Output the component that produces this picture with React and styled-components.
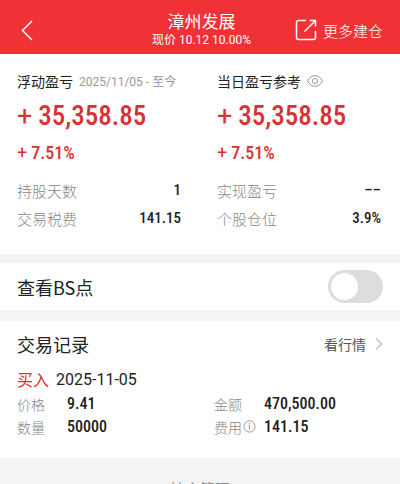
import React, { useState } from "react"
import styled, { createGlobalStyle } from "styled-components"

const stats = [
  {
    title: "浮动盈亏",
    period: "2025/11/05 - 至今",
    amount: "35,358.85",
    percent: "7.51%",
    rows: [
      ["持股天数", "1"],
      ["交易税费", "141.15"],
    ],
  },
  {
    title: "当日盈亏参考",
    toggle: true,
    amount: "35,358.85",
    percent: "7.51%",
    rows: [
      ["实现盈亏", "––"],
      ["个股仓位", "3.9%"],
    ],
  },
]

const record = [
  { label: "价格", value: "9.41" },
  { label: "金额", value: "470,500.00" },
  { label: "数量", value: "50000" },
  { label: "费用", value: "141.15", info: true },
]

const App = () => {
  const [showPoints, setShowPoints] = useState(false)

  return (
    <>
      <GlobalStyle />
      <Header>
        <IconButton aria-label="返回">
          <svg width="13" height="21" viewBox="0 0 13 21" fill="none" stroke="#fff" strokeWidth="1.5">
            <path d="M12 1L2.500 10.500l9.500 9.500" />
          </svg>
        </IconButton>
        <Heading>
          <StockName>漳州发展</StockName>
          <Price>现价 10.12 10.00%</Price>
        </Heading>
        <MoreButton>
          <svg width="22" height="22" viewBox="0 0 22 22" fill="none" stroke="#fff" strokeWidth="1.5">
            <path d="M11 1.5H3.5a2 2 0 0 0-2 2v15a2 2 0 0 0 2 2h15a2 2 0 0 0 2-2V12" />
            <path d="M14.5 1.5h6v6M20.5 1.5L9.5 12.5" />
          </svg>
          更多建仓
        </MoreButton>
      </Header>

      <Stats>
        {stats.map(stat => (
          <div key={stat.title}>
            <StatHead>
              <StatTitle>{stat.title}</StatTitle>
              {stat.period && <Period>{stat.period}</Period>}
              {stat.toggle && (
                <IconButton aria-label="隐藏金额">
                  <svg width="16" height="12" viewBox="0 0 16 12" fill="none" stroke="#999">
                    <path d="M.6 6C2.5 2.400 5 .7 8 .7S13.500 2.400 15.400 6C13.500 9.600 11 11.300 8 11.300S2.500 9.600.6 6z" />
                    <circle cx="8" cy="6" r="2.600" />
                  </svg>
                </IconButton>
              )}
            </StatHead>
            <Amount>
              <span>+</span>
              {stat.amount}
            </Amount>
            <Percent>
              <span>+</span>
              {stat.percent}
            </Percent>
            <Details>
              {stat.rows.map(([label, value]) => (
                <DetailRow key={label}>
                  <dt>{label}</dt>
                  <dd>{value}</dd>
                </DetailRow>
              ))}
            </Details>
          </div>
        ))}
      </Stats>

      <SwitchRow>
        <SwitchLabel htmlFor="bs-points">查看BS点</SwitchLabel>
        <Switch
          id="bs-points"
          type="checkbox"
          role="switch"
          checked={showPoints}
          onChange={e => setShowPoints(e.target.checked)}
        />
      </SwitchRow>

      <Records>
        <RecordsHead>
          <SectionTitle>交易记录</SectionTitle>
          <QuoteLink href="#quote">
            看行情
            <svg width="8" height="14" viewBox="0 0 8 14" fill="none" stroke="#bbb" strokeWidth="1.2">
              <path d="M1 1.500L6.500 7 1 12.500" />
            </svg>
          </QuoteLink>
        </RecordsHead>
        <Trade>
          <Side>买入</Side>
          <time>2025-11-05</time>
        </Trade>
        <RecordGrid>
          {record.map(item => (
            <RecordItem key={item.label}>
              <dt>
                {item.label}
                {item.info && (
                  <IconButton aria-label="费用说明">
                    <svg width="13" height="13" viewBox="0 0 13 13" fill="none" stroke="#999">
                      <circle cx="6.500" cy="6.500" r="5.600" />
                      <path d="M5.500 5.500h1v4M6.500 3v1.200" />
                    </svg>
                  </IconButton>
                )}
              </dt>
              <dd>{item.value}</dd>
            </RecordItem>
          ))}
        </RecordGrid>
      </Records>

      <Footer>持仓管理</Footer>
    </>
  )
}

export default App

const GlobalStyle = createGlobalStyle`
  * {
    box-sizing: border-box;
  }
  body {
    margin: 0;
    background: #f4f4f4;
    color: #222;
    font-family: Roboto, "Noto Sans CJK SC", sans-serif;
    font-size: 15px;
  }
  h1, h2, p, dl, dd {
    margin: 0;
    font-weight: 400;
  }
  button {
    padding: 0;
    border: 0;
    background: none;
    color: inherit;
    font: inherit;
    cursor: pointer;
  }
  svg {
    display: block;
  }
`

const Header = styled.header`
  display: grid;
  grid-template-columns: 1fr auto 1fr;
  align-items: center;
  height: 54px;
  padding: 6px 17px 0 20px;
  background: #f03237;
  color: #fff;
`

const IconButton = styled.button`
  display: flex;
  align-items: center;
  justify-self: start;
`

const Heading = styled.div`
  text-align: center;
`

const StockName = styled.h1`
  font-size: 17px;
  line-height: 20px;
`

const Price = styled.p`
  font-size: 12px;
  line-height: 16px;
`

const MoreButton = styled.button`
  display: flex;
  align-items: center;
  justify-self: end;
  gap: 6px;
  font-size: 15px;
  font-weight: 300;
  white-space: nowrap;
`

const Stats = styled.section`
  display: grid;
  grid-template-columns: 1fr 1fr;
  column-gap: 36px;
  padding: 16px 19px 20px 17px;
  background: #fff;
`

const StatHead = styled.div`
  display: flex;
  align-items: center;
  gap: 6px;
  height: 21px;
  white-space: nowrap;
`

const StatTitle = styled.h2`
  font-size: 14px;
`

const Period = styled.span`
  color: #999;
  font-size: 12px;
`

const Amount = styled.p`
  display: flex;
  gap: 6px;
  margin-top: 7px;
  color: #d93236;
  font-family: "Roboto Condensed", Roboto, sans-serif;
  font-size: 27px;
  font-weight: 500;
  line-height: 36px;

  span {
    font-family: Roboto, sans-serif;
    font-weight: 400;
  }
`

const Percent = styled(Amount)`
  gap: 4px;
  margin-top: 7px;
  font-size: 18px;
  line-height: 24px;
`

const Details = styled.dl`
  margin-top: 13px;
`

const DetailRow = styled.div`
  display: flex;
  justify-content: space-between;
  line-height: 28px;

  dt {
    color: #888;
    font-weight: 300;
  }
  dd {
    font-family: "Roboto Condensed", Roboto, sans-serif;
    font-weight: 500;
    line-height: 24px;
  }
`

const SwitchRow = styled.section`
  display: flex;
  align-items: center;
  justify-content: space-between;
  margin: 9px 0 11px;
  padding: 7px 17px;
  background: #fff;
`

const SwitchLabel = styled.label`
  font-family: "Noto Sans CJK SC", sans-serif;
  font-size: 18px;
  line-height: 24px;
`

const Switch = styled.input`
  appearance: none;
  display: flex;
  align-items: center;
  width: 55px;
  height: 33px;
  margin: 0;
  padding: 0 3px;
  border-radius: 17px;
  background: #ddd;
  cursor: pointer;

  &::before {
    content: "";
    width: 27px;
    height: 27px;
    border-radius: 50%;
    background: #fff;
  }
  &:checked {
    justify-content: flex-end;
    background: #f03237;
  }
`

const Records = styled.section`
  padding: 9px 17px 20px;
  background: #fff;
`

const RecordsHead = styled.div`
  display: flex;
  align-items: center;
  justify-content: space-between;
  height: 28px;
`

const SectionTitle = styled.h2`
  font-size: 18px;
`

const QuoteLink = styled.a`
  display: flex;
  align-items: center;
  gap: 9px;
  color: #555;
  font-size: 14px;
  text-decoration: none;
`

const Trade = styled.div`
  display: flex;
  align-items: center;
  gap: 7px;
  height: 24px;
  margin-top: 9px;
  font-size: 16px;
`

const Side = styled.span`
  color: #d93236;
`

const RecordGrid = styled.dl`
  display: grid;
  grid-template-columns: 1fr 1fr;
  column-gap: 28px;
  margin-top: 1px;
`

const RecordItem = styled.div`
  display: grid;
  grid-template-columns: 50px 1fr;
  align-items: center;
  height: 23px;

  dt {
    display: flex;
    align-items: center;
    gap: 1px;
    color: #888;
    font-size: 14px;
    font-weight: 300;
  }
  dd {
    font-family: "Roboto Condensed", Roboto, sans-serif;
    font-size: 16px;
    font-weight: 500;
  }
`

const Footer = styled.footer`
  padding: 20px 0;
  color: #888;
  text-align: center;
`
